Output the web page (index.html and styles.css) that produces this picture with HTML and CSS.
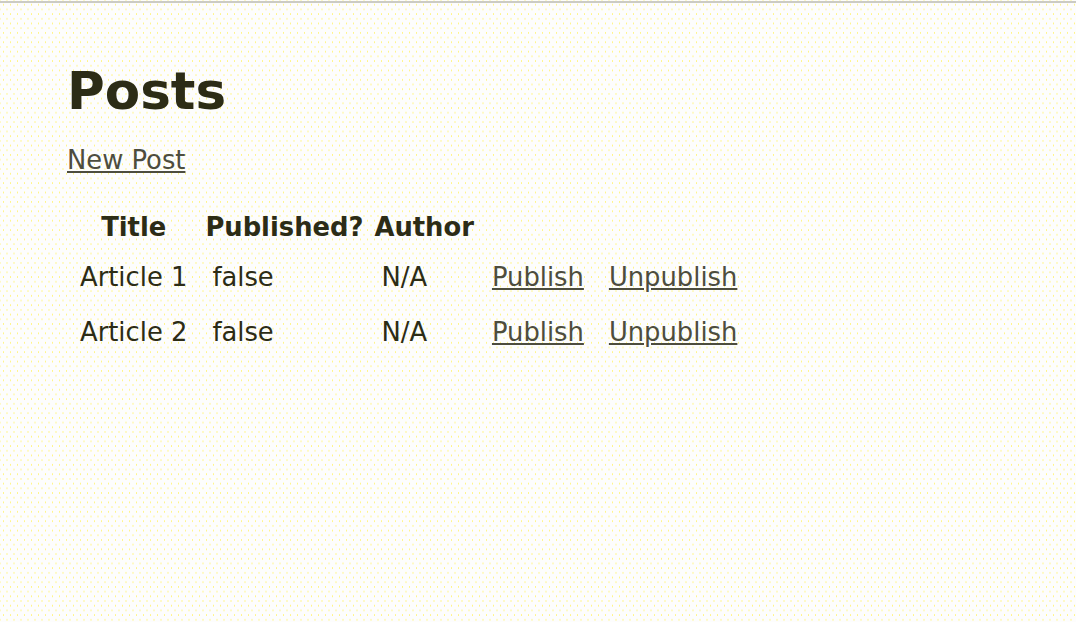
FILE: index.html
```html
<!DOCTYPE html>
<html lang="en">
<head>
<meta charset="utf-8">
<title>Posts</title>
<link rel="stylesheet" href="styles.css">
</head>
<body>
<div class="rule"></div>
<main class="page">
  <h1 class="title">Posts</h1>
  <p class="actions"><a href="#">New Post</a></p>
  <table class="posts">
    <thead>
      <tr>
        <th>Title</th>
        <th>Published?</th>
        <th>Author</th>
        <th></th>
        <th></th>
      </tr>
    </thead>
    <tbody>
      <tr>
        <td>Article 1</td>
        <td>false</td>
        <td>N/A</td>
        <td><a href="#">Publish</a></td>
        <td><a href="#">Unpublish</a></td>
      </tr>
      <tr>
        <td>Article 2</td>
        <td>false</td>
        <td>N/A</td>
        <td><a href="#">Publish</a></td>
        <td><a href="#">Unpublish</a></td>
      </tr>
    </tbody>
  </table>
</main>
</body>
</html>
```

FILE: styles.css
```css
html, body {
  margin: 0;
  padding: 0;
}

body {
  min-height: 622px;
  font-family: "DejaVu Sans", Verdana, sans-serif;
  font-size: 25.8px;
  color: #2c2c16;
  background-color: #fdfdfd;
  background-image:
    radial-gradient(circle, #fff58a 0.6px, transparent 1px),
    radial-gradient(circle, #fff58a 0.6px, transparent 1px);
  background-size: 7px 9.4px, 7px 9.4px;
  background-position: 0 0, 3.5px 4.7px;
}

.rule {
  height: 2px;
  margin-top: 1px;
  background: #cbcbc4;
}

.page {
  padding: 58px 0 0 67px;
}

.title {
  margin: 0 0 24px;
  font-size: 51.5px;
  font-weight: bold;
  line-height: normal;
}

.actions {
  margin: 0 0 28px;
}

a {
  color: #4d4d3e;
  text-decoration: underline;
}

.posts {
  border-spacing: 3px;
  margin-left: -1px;
}

.posts th {
  padding: 6px 4px;
  font-weight: bold;
  text-align: center;
}

.posts td {
  padding: 11px;
  text-align: left;
}
```
